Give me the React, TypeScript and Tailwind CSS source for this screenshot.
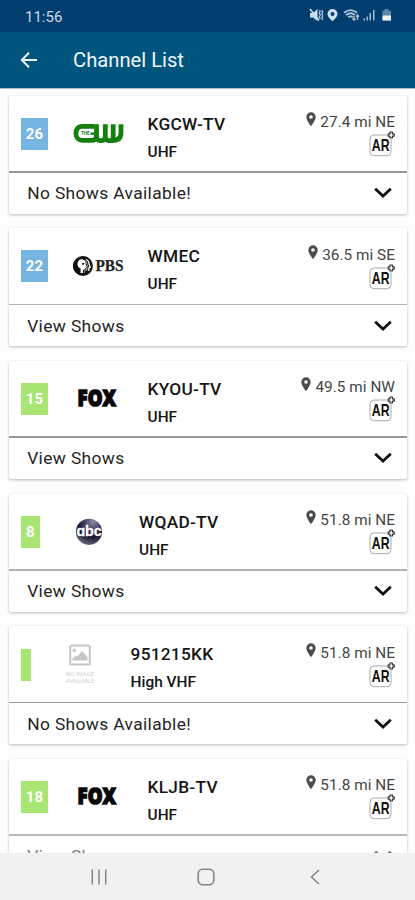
import React from "react";

type Network = "cw" | "pbs" | "fox" | "abc" | "none";

interface Channel {
  number: string;
  badge: string;
  network: Network;
  name: string;
  band: string;
  distance: string;
  footer: string;
  divider: string;
  faded?: boolean;
}

const BLUE = "w-[27.5px] bg-[#76b5e2]";
const GREEN = "w-[27.5px] bg-[#a9e572]";

const channels: Channel[] = [
  { number: "26", badge: BLUE, network: "cw", name: "KGCW-TV", band: "UHF", distance: "27.4 mi NE", footer: "No Shows Available!", divider: "bg-[#999]" },
  { number: "22", badge: BLUE, network: "pbs", name: "WMEC", band: "UHF", distance: "36.5 mi SE", footer: "View Shows", divider: "bg-[#b4b4b4]" },
  { number: "15", badge: GREEN, network: "fox", name: "KYOU-TV", band: "UHF", distance: "49.5 mi NW", footer: "View Shows", divider: "bg-[#999]" },
  { number: "8", badge: "w-[19px] bg-[#a9e572]", network: "abc", name: "WQAD-TV", band: "UHF", distance: "51.8 mi NE", footer: "View Shows", divider: "bg-[#b0b0b0]" },
  { number: "", badge: "w-[10.5px] bg-[#a9e572]", network: "none", name: "951215KK", band: "High VHF", distance: "51.8 mi NE", footer: "No Shows Available!", divider: "bg-[#999]" },
  { number: "18", badge: GREEN, network: "fox", name: "KLJB-TV", band: "UHF", distance: "51.8 mi NE", footer: "View Shows", divider: "bg-[#b8b8b8]", faded: true },
];

function Logo({ network }: { network: Network }) {
  if (network === "cw") {
    return (
      <svg width="52" height="24" viewBox="0 0 52 24" fill="none" stroke="#16800f" strokeWidth="4.8" strokeLinejoin="round">
        <path d="M21 4.4H9.5C5 4.4 2.9 7.5 2.9 11.4S5.5 18.4 9.5 18.4H19Q23.5 18.4 23.5 14V2.2" />
        <path d="M23.5 12V14.5Q23.5 18.6 27.2 18.6H28.5Q32.3 18.6 32.3 14.5V2.2M32.3 14.5Q32.3 18.6 36 18.6H39.5Q48 18.6 48 10.5V2.2M40.2 2.2V15Q40.2 18.6 37 18.6" />
        <path d="M17.5 11.6H23" strokeWidth="2.4" />
        <text x="8" y="13.2" fontSize="4.6" fontWeight="700" fill="#16800f" stroke="none" fontFamily="Roboto, sans-serif">THE</text>
      </svg>
    );
  }
  if (network === "pbs") {
    return (
      <svg width="52" height="24" viewBox="0 0 52 24">
        <circle cx="9.9" cy="12" r="10" fill="#111" />
        <path d="M7.6 5.2H9.5C13 5.2 14.7 8 14.2 10.5L15.7 13.2L14.2 13.8V16.5H11.5V19H7.6V14.5C3.5 13 3.5 7 7.6 5.2Z" fill="#fff" />
        <path d="M10 5.2C13.8 6 13 10 13 10L14.5 13L12.8 14V16H10.5V20" fill="none" stroke="#111" strokeWidth="1" />
        <path d="M13 5.5C16.4 7 16 10 16 10L17.3 13L15.8 14.3V17" fill="none" stroke="#fff" strokeWidth="1.3" />
        <circle cx="10.1" cy="9.8" r="1.1" fill="#111" />
        <text x="22.5" y="17.4" fontSize="16.5" fontWeight="700" fill="#222" textLength="28" lengthAdjust="spacingAndGlyphs" fontFamily="'Liberation Serif', serif" stroke="#222" strokeWidth="0.25">PBS</text>
      </svg>
    );
  }
  if (network === "fox") {
    return (
      <svg width="52" height="24" viewBox="0 0 52 24" overflow="visible">
        <text x="4.6" y="19.4" fontSize="22.5" fontWeight="900" fill="#080808" stroke="#080808" strokeWidth="1.5" textLength="38.4" lengthAdjust="spacingAndGlyphs" fontFamily="'Open Sans', sans-serif">FOX</text>
      </svg>
    );
  }
  if (network === "abc") {
    return (
      <svg width="52" height="28" viewBox="0 0 52 28">
        <defs>
          <radialGradient id="globe" cx="0.65" cy="0.12" r="0.9">
            <stop offset="0" stopColor="#8b8ca5" />
            <stop offset="0.35" stopColor="#414460" />
            <stop offset="0.65" stopColor="#15182c" />
            <stop offset="1" stopColor="#65687a" />
          </radialGradient>
        </defs>
        <circle cx="24" cy="13.8" r="13.1" fill="url(#globe)" />
        <text x="11.4" y="18.3" fontSize="14.5" fontWeight="700" fill="#fff" stroke="#fff" strokeWidth="0.3" textLength="25.4" lengthAdjust="spacingAndGlyphs" fontFamily="'Liberation Sans', sans-serif">ɑbc</text>
      </svg>
    );
  }
  return (
    <svg width="52" height="42" viewBox="0 0 52 42" fontFamily="Roboto, sans-serif">
      <rect x="14.2" y="2.6" width="19.6" height="19" rx="1" fill="none" stroke="#c6c6c6" strokeWidth="2" />
      <circle cx="18.3" cy="7.4" r="1.7" fill="#c6c6c6" />
      <path d="M16.5 17.6V15.6L20 12.6L21.5 13.6L26 8.1L31.5 14.1V17.6Z" fill="#c6c6c6" />
      <text x="10" y="33" fontSize="5.8" fill="#d0d0d0" textLength="28">NO IMAGE</text>
      <text x="9.8" y="39.6" fontSize="5.8" fill="#d0d0d0" textLength="28.5">AVAILABLE</text>
    </svg>
  );
}

function Pin() {
  return (
    <svg width="10" height="15" viewBox="0 0 10 15">
      <path fill="#4c4c4c" fillRule="evenodd" d="M5 .3A4.7 4.7 0 0 0 .3 5C.3 8.3 5 14.2 5 14.2S9.7 8.3 9.7 5A4.7 4.7 0 0 0 5 .3ZM5 3.2A1.8 1.8 0 1 1 5 6.8A1.8 1.8 0 0 1 5 3.2Z" />
    </svg>
  );
}

function ArIcon() {
  return (
    <svg width="27" height="27" viewBox="0 0 27 27" overflow="visible">
      <rect x="2" y="4" width="21" height="20.7" rx="4" fill="#fff" stroke="#aaa" strokeWidth="1" />
      <text x="3.8" y="20.2" fontSize="16.6" fontWeight="700" fill="#111" textLength="17.8" lengthAdjust="spacingAndGlyphs" fontFamily="'Liberation Sans', sans-serif">AR</text>
      <circle cx="23.2" cy="4" r="4.3" fill="#fff" />
      <path d="M22 1H24.4V2.8H26.2V5.2H24.4V7H22V5.2H20.2V2.8H22Z" fill="#fff" stroke="#333" strokeWidth="1.2" strokeLinejoin="round" />
    </svg>
  );
}

function ChannelCard({ channel }: { channel: Channel }) {
  return (
    <article className="h-[118.2px] shrink-0 overflow-visible rounded-[2px] bg-white shadow-[0_1px_3px_rgba(0,0,0,0.27)]">
      <div className="flex h-[75.5px] pl-[12.2px] pr-[11.5px]">
        <div className={`mt-[22.3px] flex h-8 shrink-0 items-center justify-center pt-px text-[15px] font-bold leading-none text-white ${channel.badge}`}>
          {channel.number}
        </div>
        <div className={`ml-[25px] flex w-[52px] shrink-0 justify-center ${channel.network === "none" ? "mt-[17px]" : channel.network === "abc" ? "mt-[24px]" : "mt-[26px]"}`}>
          <Logo network={channel.network} />
        </div>
        <div className="ml-[22.4px] flex-1 whitespace-nowrap pt-[18px] font-medium text-[#151515]">
          <div className="text-[17.3px] leading-5 tracking-[0.25px]">{channel.name}</div>
          <div className="mt-2 text-[15.4px] leading-5">{channel.band}</div>
        </div>
        <div className="flex flex-col items-end pt-[16.5px]">
          <div className="flex items-start gap-[4.2px] whitespace-nowrap text-[15.3px] leading-5 tracking-[0.05px] text-[#444]">
            <Pin />
            <span>{channel.distance}</span>
          </div>
          <div className="-mt-px">
            <ArIcon />
          </div>
        </div>
      </div>
      <div className={`h-[1.5px] ${channel.divider}`} />
      <div className={`flex h-[41px] items-center justify-between pl-[18.7px] pr-[15px] ${channel.faded ? "opacity-60" : ""}`}>
        <span className="text-[17.4px] leading-5 tracking-[0.36px] text-[#242424]">{channel.footer}</span>
        <svg width="18" height="12" viewBox="0 0 18 12">
          <path d="M1.2 1.8L9 9L16.8 1.8" fill="none" stroke="#111" strokeWidth="2.8" />
        </svg>
      </div>
    </article>
  );
}

function StatusIcons() {
  return (
    <svg width="86" height="18" viewBox="0 0 86 18" fill="#cfdeea">
      <path d="M1 6H4L8.5 2V14L4 10.5H1Z" />
      <path d="M1 2L10 13.5" stroke="#cfdeea" strokeWidth="1.5" />
      <path d="M10.2 3L11.3 4.5L10.2 6L11.3 8L10.2 10L11.3 12M12.8 3L13.8 5L12.8 7L13.8 9L12.8 11L13.8 13" fill="none" stroke="#b7cbdc" strokeWidth="1.2" />
      <path fillRule="evenodd" d="M23.5 2A5 5 0 0 0 18.5 7C18.5 10 23.5 14.3 23.5 14.3S28.5 10 28.5 7A5 5 0 0 0 23.5 2ZM23.5 5A2 2 0 1 1 23.5 9A2 2 0 0 1 23.5 5Z" />
      <path d="M35 5.8Q41.5 .5 48 5.8M37 8Q41.5 4.5 46 8M39.2 10.2Q41.5 8.5 43.8 10.2" fill="none" stroke="#a9c2d6" strokeWidth="1.8" />
      <path d="M45 9V13M43.5 11.5L45 13.2L46.5 11.5M48.5 13V8M47 9.7L48.5 8L50 9.7" fill="none" stroke="#a9c2d6" strokeWidth="1.3" />
      <path d="M54.5 11.5H56V13.5H54.5ZM57.5 9.5H59V13.5H57.5ZM60.5 6H62V13.5H60.5ZM64 3H65.5V13.5H64Z" fill="#9dbad1" />
      <path d="M75.5 2H79.5V3.5H82V13.5H73.5V3.5H75.5Z" fill="#5d88ab" />
      <path d="M73.5 8.5H82V13.5H73.5Z" fill="#eef3f7" />
    </svg>
  );
}

export default function App() {
  return (
    <div className="flex h-[900px] w-[415px] flex-col overflow-hidden bg-[#fdfdfd] font-[Roboto,sans-serif]">
      <div className="flex h-8 shrink-0 items-center justify-between bg-[#003e70] pl-[25px] pr-[20px]">
        <span className="pt-px text-[15px] leading-5 text-[#c9d9e6]">11:56</span>
        <StatusIcons />
      </div>
      <header className="flex h-14 shrink-0 items-center bg-[#00557f] pl-5">
        <svg width="18" height="18" viewBox="0 0 18 18">
          <path d="M17 9H2M9 1.8L1.8 9L9 16.2" fill="none" stroke="#f2f8fb" strokeWidth="2" />
        </svg>
        <h1 className="ml-[35px] text-[20.2px] font-normal leading-6 text-[#eef6fa]">Channel List</h1>
      </header>
      <div className="h-px shrink-0 bg-[#a3c0da]" />
      <main className="flex min-h-0 flex-1 flex-col gap-[14.5px] overflow-hidden px-[8.5px] pt-[6.5px]">
        {channels.map((channel) => (
          <ChannelCard key={channel.name} channel={channel} />
        ))}
      </main>
      <nav className="flex h-[47px] shrink-0 items-center justify-between bg-[#f1f1f1] pl-[91px] pr-[95px]">
        <svg width="16" height="16" viewBox="0 0 16 16">
          <path d="M1.3 .5V15.5M8 .5V15.5M14.7 .5V15.5" stroke="#858585" strokeWidth="1.5" />
        </svg>
        <svg className="mr-[5px]" width="18" height="18" viewBox="0 0 18 18">
          <rect x="1.2" y="1.2" width="15.6" height="15.6" rx="4.5" fill="none" stroke="#858585" strokeWidth="1.6" />
        </svg>
        <svg width="10" height="16" viewBox="0 0 10 16">
          <path d="M9 1L1.5 8L9 15" fill="none" stroke="#858585" strokeWidth="1.5" />
        </svg>
      </nav>
    </div>
  );
}
